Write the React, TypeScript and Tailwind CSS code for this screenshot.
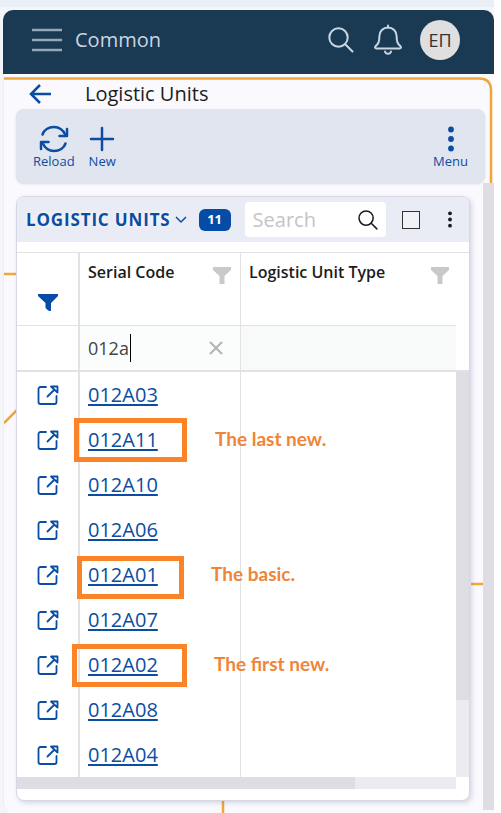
import React, { useState } from "react";

type Note = { text: string; box: string; label: string };
type Unit = { code: string; note?: Note };

const units: Unit[] = [
  { code: "012A03" },
  {
    code: "012A11",
    note: { text: "The last new.", box: "-left-[6px] top-px h-[44px] w-[113px]", label: "left-[135px]" },
  },
  { code: "012A10" },
  { code: "012A06" },
  {
    code: "012A01",
    note: { text: "The basic.", box: "-left-[3px] top-1 h-[43px] w-[107px]", label: "left-[131px]" },
  },
  { code: "012A07" },
  {
    code: "012A02",
    note: { text: "The first new.", box: "-left-2 top-[2px] h-[43px] w-[115px]", label: "left-[134px]" },
  },
  { code: "012A08" },
  { code: "012A04" },
];

function SearchIcon({ className }: { className: string }) {
  return (
    <svg viewBox="0 0 26 26" className={className} fill="none" stroke="currentColor" strokeWidth="2" strokeLinecap="round">
      <circle cx="10.5" cy="10.5" r="9.2" />
      <path d="M17.2 17.2 24.5 24.5" />
    </svg>
  );
}

function BellIcon() {
  return (
    <svg viewBox="0 0 28 32" className="h-8 w-7" fill="none" stroke="currentColor" strokeWidth="2" strokeLinejoin="round" strokeLinecap="round">
      <path d="M14 1.500v2" />
      <path d="M14 3.500c-5 0-8.600 3.800-8.600 8.600 0 6-1.200 7.700-3.900 10.200-.8.9-.5 2.200.9 2.200h23.200c1.400 0 1.700-1.300.9-2.200-2.700-2.500-3.900-4.200-3.900-10.200 0-4.800-3.600-8.600-8.600-8.600Z" />
      <path d="M11 27.500c.4 1.500 1.500 2.300 3 2.300s2.600-.8 3-2.300" />
    </svg>
  );
}

function ReloadIcon() {
  return (
    <svg viewBox="0 0 30 28" className="h-7 w-[30px]" fill="none" stroke="currentColor" strokeWidth="2.500" strokeLinecap="round" strokeLinejoin="round">
      <path d="M3.500 9.500C5 5 9.500 2 15 2c5 0 9 2.800 11.500 8" />
      <path d="M28 4v7h-7.500" />
      <path d="M26.500 18.500C25 23 20.500 26 15 26c-5 0-9-2.800-11.500-8" />
      <path d="M2 24v-7h7.500" />
    </svg>
  );
}

function OpenIcon() {
  return (
    <svg viewBox="0 0 22 20" className="h-5 w-[22px]" fill="none" stroke="currentColor" strokeWidth="1.800" strokeLinecap="round" strokeLinejoin="round">
      <path d="M9 2H3.500C2.300 2 1.500 2.800 1.500 4v13c0 1.200.8 2 2 2h14c1.200 0 2-.8 2-2v-6" />
      <path d="M10.500 11.500 17.500 4.500M14 1.500h6.500v6L14 1.500Z" />
    </svg>
  );
}

function GreyFunnel() {
  return (
    <svg viewBox="0 0 18 17" className="h-[17px] w-[18px]" fill="#c9c9c9">
      <path d="M0 0h18v3l-6.500 6v8h-5V9L0 3Z" />
    </svg>
  );
}

function Dots({ className }: { className: string }) {
  return (
    <svg viewBox="0 0 6 26" className={className} fill="currentColor">
      <circle cx="3" cy="3.500" r="2.900" />
      <circle cx="3" cy="13" r="2.900" />
      <circle cx="3" cy="22.500" r="2.900" />
    </svg>
  );
}

function Backdrop() {
  return (
    <svg className="pointer-events-none absolute inset-0 h-full w-full" fill="none" stroke="#f0a63a" strokeWidth="2.500">
      <path d="M0 4.500h475q12 0 12 12V510H467" />
      <path d="M0 200h14M0 349 14 335M219 720v30" />
    </svg>
  );
}

export default function App() {
  const [filter, setFilter] = useState("012a");
  const [query, setQuery] = useState("");

  return (
    <div className="min-h-screen bg-[#e9eff6] pr-[7px] font-['Open_Sans','Noto_Sans',sans-serif] shadow-[inset_-7px_0_0_#fff]">
      <div className="h-[7px]" />
      <div className="bg-[#f4f5f9] pt-[3px] pl-[3px]">
        <header className="flex h-16 items-center rounded-t-[10px] bg-[#1a3953] pr-[34px] pb-1 pl-7 text-[#c9d6e2]">
          <button aria-label="Main menu" className="flex h-8 w-8 items-center justify-center text-[#95a7b8]">
            <svg viewBox="0 0 32 24" className="h-6 w-8" stroke="currentColor" strokeWidth="2.500">
              <path d="M1 2h30M1 12h30M1 22h30" />
            </svg>
          </button>
          <span className="ml-3 text-[20px] leading-7">Common</span>
          <div className="ml-auto flex items-center">
            <button aria-label="Search"><SearchIcon className="h-[26px] w-[26px]" /></button>
            <button aria-label="Notifications" className="ml-5"><BellIcon /></button>
            <button aria-label="Account" className="ml-[18px] flex h-10 w-10 items-center justify-center rounded-full bg-[#dfdfdf] text-[18px] text-[#333]">
              ЕП
            </button>
          </div>
        </header>

        <main className="relative overflow-hidden rounded-bl-xl border-l border-[#eeeef3] bg-[#f9f9fe] pl-3">
          <Backdrop />
          <div className="relative flex h-[35px] items-center pt-[5px] pl-[13px]">
            <button aria-label="Back" className="text-[#0b4da2]">
              <svg viewBox="0 0 22 20" className="h-5 w-[22px]" fill="none" stroke="currentColor" strokeWidth="2.500">
                <path d="M22 10H2M11 1 2 10l9 9" />
              </svg>
            </button>
            <h1 className="ml-[34px] text-[20px] leading-6 text-[#1c1c1c]">Logistic Units</h1>
          </div>

          <div className="relative mr-[9px] flex h-[74px] items-start rounded-lg bg-[#e1e5ef] px-[17px] pt-4 text-[13px] leading-4 text-[#0b4da2] shadow-sm">
            <button className="flex flex-col items-center">
              <ReloadIcon />
              <span>Reload</span>
            </button>
            <button className="ml-[14px] flex flex-col items-center">
              <svg viewBox="0 0 26 28" className="h-7 w-[26px]" stroke="currentColor" strokeWidth="2.500" strokeLinecap="round">
                <path d="M13 3v22M2 14h22" />
              </svg>
              <span>New</span>
            </button>
            <button className="ml-auto flex flex-col items-center">
              <Dots className="h-7 w-[6px]" />
              <span>Menu</span>
            </button>
          </div>

          <div className="relative flex">
            <section className="mt-[13px] mr-[13px] mb-[13px] min-w-0 flex-1 rounded-lg border border-[#d6d7e2] bg-white shadow-[2px_2px_5px_rgba(60,60,100,0.18)]">
              <div className="flex h-[45px] items-center rounded-t-lg bg-[#e9ebf5] pr-[17px] pl-[9px]">
                <button className="flex items-center text-[17px] font-bold whitespace-nowrap text-[#0b4da2]">
                  <span className="tracking-wider [text-shadow:0_0_6px_#fff]">LOGISTIC UNITS</span>
                  <svg viewBox="0 0 12 8" className="ml-1 h-2 w-3" fill="none" stroke="currentColor" strokeWidth="1.500">
                    <path d="m1 1 5 5 5-5" />
                  </svg>
                </button>
                <span className="ml-3 flex h-[22px] w-8 items-center justify-center rounded-md bg-[#064ca6] text-[13px] font-bold text-white">11</span>
                <label className="ml-[14px] flex h-[35px] min-w-0 flex-1 items-center rounded bg-white pr-2 pl-2">
                  <input
                    aria-label="Search units"
                    placeholder="Search"
                    value={query}
                    onChange={(e) => setQuery(e.target.value)}
                    className="min-w-0 flex-1 text-[20px] leading-7 text-[#333] outline-none placeholder:text-[#c4c4c4]"
                  />
                  <SearchIcon className="h-5 w-5 text-[#1c1c1c]" />
                </label>
                <input type="checkbox" aria-label="Select all" className="ml-4 h-[18px] w-[18px] appearance-none border border-[#333] bg-[#f1f2f8]" />
                <button aria-label="More" className="ml-7 text-[#1c1c1c]"><Dots className="h-[17px] w-1" /></button>
              </div>

              <div className="relative mt-[10px]">
                <table className="w-full table-fixed border-separate border-spacing-0 text-left">
                  <colgroup>
                    <col className="w-[63px]" />
                    <col className="w-[161px]" />
                    <col />
                    <col className="w-[13px]" />
                  </colgroup>
                  <thead>
                    <tr className="h-[73px] align-top text-[16px] leading-5 text-[#1c1c1c]">
                      <th className="border-t border-r-2 border-[#e2e2e5]">
                        <button aria-label="Edit filter" className="mt-[41px] ml-[21px] block">
                          <svg viewBox="0 0 20 17" className="h-[17px] w-5" fill="#064ca6">
                            <path d="M0 0h20v2l-7 7v8l-2.500-.3L7.500 14V9L0 2Z" />
                          </svg>
                        </button>
                      </th>
                      <th className="border-t border-r border-[#e2e2e5] pt-[9px] pr-[9px] pl-2 font-semibold">
                        <div className="flex items-start justify-between">
                          Serial Code
                          <button aria-label="Filter serial code" className="mt-[5px]"><GreyFunnel /></button>
                        </div>
                      </th>
                      <th className="border-t border-[#e2e2e5] pt-[9px] pr-[7px] pl-2 font-semibold">
                        <div className="flex items-start justify-between">
                          Logistic Unit Type
                          <button aria-label="Filter logistic unit type" className="mt-[5px]"><GreyFunnel /></button>
                        </div>
                      </th>
                      <th aria-hidden="true" className="border-t border-[#e2e2e5]" />
                    </tr>
                    <tr className="h-[47px]">
                      <td className="border-t border-r-2 border-b-2 border-[#e2e2e5]" />
                      <td className="border-t border-r border-b-2 border-[#e2e2e5] bg-[#fbfdfc] pr-[17px] pl-2">
                        <div className="flex items-center">
                          <span className="relative min-w-0 flex-1">
                            <input
                              aria-label="Serial code filter"
                              value={filter}
                              onChange={(e) => setFilter(e.target.value)}
                              className="block w-full text-[18px] leading-7 text-[#444] outline-none"
                            />
                            <span className="absolute top-0 left-[42px] h-7 w-px bg-black" />
                          </span>
                          <button aria-label="Clear" onClick={() => setFilter("")}>
                            <svg viewBox="0 0 14 14" className="h-[14px] w-[14px]" stroke="#b3b3b3" strokeWidth="2">
                              <path d="m1 1 12 12M13 1 1 13" />
                            </svg>
                          </button>
                        </div>
                      </td>
                      <td className="border-t border-b-2 border-[#e2e2e5] bg-[#f7faf9]" />
                      <td className="border-b-2 border-[#e2e2e5]" />
                    </tr>
                  </thead>
                  <tbody>
                    {units.map((unit) => (
                      <tr key={unit.code} className="h-[45px]">
                        <td className="border-r-2 border-[#e2e2e5]">
                          <button aria-label={`Open ${unit.code}`} className="ml-5 block text-[#0b4da2]">
                            <OpenIcon />
                          </button>
                        </td>
                        <td className="relative border-r border-[#e2e2e5] pl-2">
                          <a href="#" className="text-[20px] leading-7 text-[#0b4da2] underline decoration-2 underline-offset-2">{unit.code}</a>
                          {unit.note && (
                            <>
                              <span className={`absolute border-[5px] border-[#fb8429] ${unit.note.box}`} />
                              <span className={`absolute top-[10px] z-10 font-['Lato','Open_Sans',sans-serif] text-[19px] leading-6 font-bold whitespace-nowrap text-[#f08437] ${unit.note.label}`}>
                                {unit.note.text}
                              </span>
                            </>
                          )}
                        </td>
                        <td />
                        <td />
                      </tr>
                    ))}
                  </tbody>
                </table>
                <div className="absolute top-[120px] right-0 bottom-0 w-[13px] bg-[#ecebf1]">
                  <div className="h-[81%] bg-[#dedde3]" />
                </div>
              </div>
              <div className="mr-[13px] h-3 bg-[#ecebf1]">
                <div className="h-full w-[77%] bg-[#dedde3]" />
              </div>
              <div className="mt-px h-[10px]" />
            </section>
            <div className="mb-1 w-[11px] bg-[#dedde3]" />
          </div>
        </main>
      </div>
    </div>
  );
}
